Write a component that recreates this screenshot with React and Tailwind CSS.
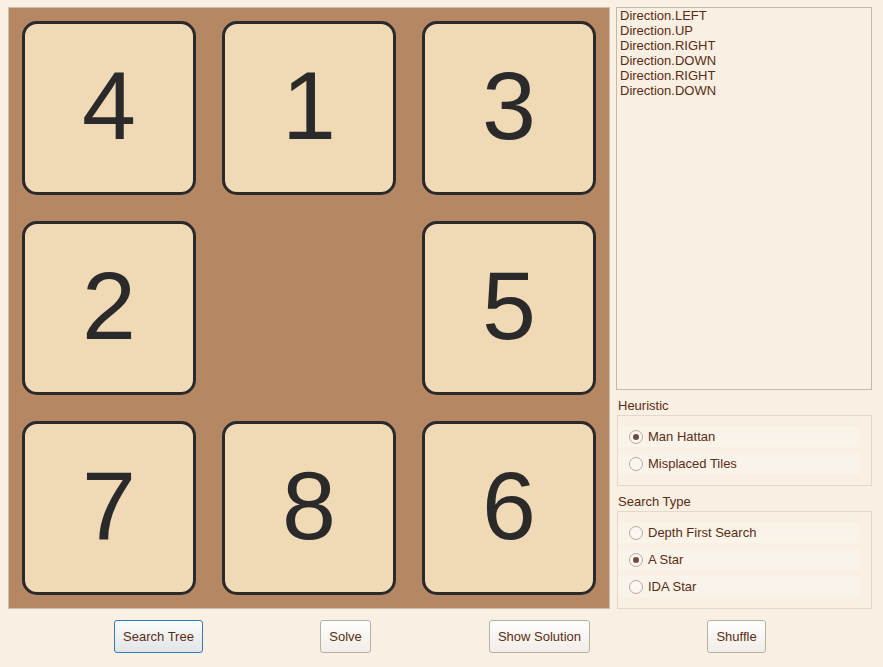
import React from "react";

const tiles = [4, 1, 3, 2, null, 5, 7, 8, 6];

function Radio({ label, checked }) {
  return (
    <div className="flex items-center h-[21px] bg-[#faf3ea] pl-[11px]">
      <span className="w-[14px] h-[14px] rounded-full border border-[#b3a899] bg-[#fbf6ef] flex items-center justify-center">
        {checked && <span className="w-[6px] h-[6px] rounded-full bg-[#6e4b3b]" />}
      </span>
      <span className="ml-[5px]">{label}</span>
    </div>
  );
}

function Group({ title, items }) {
  return (
    <div className="flex flex-col">
      <div className="h-[15px] leading-[15px] pl-[2px] mt-[8px]">{title}</div>
      <div className="mt-[2px] ml-[1px] border border-[#e2d9cc] pt-[10px] pb-[11px] pr-[11px] flex flex-col gap-[6px]">
        {items.map((it) => (
          <Radio key={it.label} {...it} />
        ))}
      </div>
    </div>
  );
}

function Btn({ children, focus, className = "" }) {
  return (
    <button
      className={
        "h-[33px] rounded-[3px] border text-[13px] text-[#5a2d12] flex items-center justify-center " +
        (focus
          ? "border-[#2f7bbd] bg-gradient-to-b from-[#fbfcfc] to-[#e1e5e5] "
          : "border-[#b9b0a4] bg-gradient-to-b from-[#ffffff] to-[#f1ede7] ") +
        className
      }
    >
      {children}
    </button>
  );
}

export default function App() {
  return (
    <div
      className="w-[883px] h-[667px] bg-[#f9efe2] text-[13px] text-[#5a2d12] flex flex-col"
      style={{ fontFamily: '"Liberation Sans", Arial, sans-serif' }}
    >
      <div className="flex pt-[7px] pl-[8px]">
        <div className="w-[602px] h-[602px] border border-[#c9c0b2] bg-[#b58863] grid grid-cols-3 grid-rows-3">
          {tiles.map((t, i) => (
            <div key={i} className="p-[13px]">
              {t !== null && (
                <div className="w-full h-full rounded-[15px] border-[3px] border-[#2a2a2a] bg-[#f0d9b5] flex items-center justify-center pb-[6px] text-[97px] leading-none text-[#2a2a2a]">
                  {t}
                </div>
              )}
            </div>
          ))}
        </div>
        <div className="ml-[6px] w-[256px] flex flex-col">
          <div className="h-[383px] border border-[#c2b9ab] bg-[#f9efe2] pl-[3px] leading-[15px]">
            <div>Direction.LEFT</div>
            <div>Direction.UP</div>
            <div>Direction.RIGHT</div>
            <div>Direction.DOWN</div>
            <div>Direction.RIGHT</div>
            <div>Direction.DOWN</div>
          </div>
          <Group
            title="Heuristic"
            items={[
              { label: "Man Hattan", checked: true },
              { label: "Misplaced Tiles" },
            ]}
          />
          <Group
            title="Search Type"
            items={[
              { label: "Depth First Search" },
              { label: "A Star", checked: true },
              { label: "IDA Star" },
            ]}
          />
        </div>
      </div>
      <div className="flex mt-[11px] pl-[114px]">
        <Btn focus className="w-[89px]">Search Tree</Btn>
        <Btn className="w-[51px] ml-[117px]">Solve</Btn>
        <Btn className="w-[101px] ml-[118px]">Show Solution</Btn>
        <Btn className="w-[59px] ml-[117px]">Shuffle</Btn>
      </div>
    </div>
  );
}
